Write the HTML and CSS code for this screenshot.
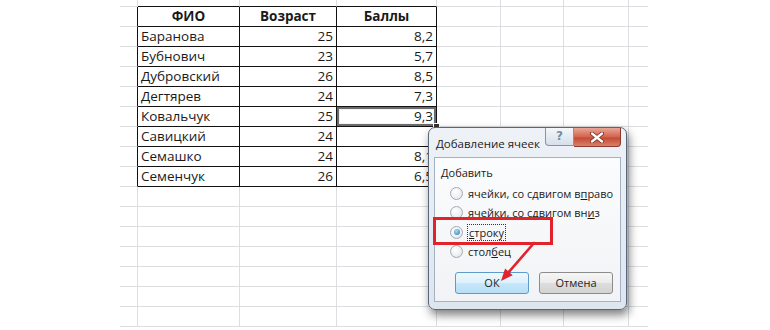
FILE: index.html
```html
<!DOCTYPE html>
<html lang="ru">
<head>
    <meta charset="UTF-8">
    <title>Добавление ячеек</title>
    <link rel="stylesheet" href="styles.css">
</head>
<body>
    <div class="sheet">
        <table class="grid">
            <colgroup>
                <col class="c-gut"><col class="c-b"><col class="c-c"><col class="c-d">
                <col class="c-e"><col class="c-f"><col class="c-g"><col class="c-h">
            </colgroup>
            <tr class="r-top"><td></td><td class="above"></td><td class="above"></td><td class="above"></td><td></td><td></td><td></td><td></td></tr>
            <tr><td class="edge"></td><th class="t">ФИО</th><th class="t">Возраст</th><th class="t">Баллы</th><td></td><td></td><td></td><td></td></tr>
            <tr><td class="edge"></td><td class="t name">Баранова</td><td class="t num">25</td><td class="t num">8,2</td><td></td><td></td><td></td><td></td></tr>
            <tr><td class="edge"></td><td class="t name">Бубнович</td><td class="t num">23</td><td class="t num">5,7</td><td></td><td></td><td></td><td></td></tr>
            <tr><td class="edge"></td><td class="t name">Дубровский</td><td class="t num">26</td><td class="t num">8,5</td><td></td><td></td><td></td><td></td></tr>
            <tr><td class="edge"></td><td class="t name">Дегтярев</td><td class="t num">24</td><td class="t num">7,3</td><td></td><td></td><td></td><td></td></tr>
            <tr><td class="edge"></td><td class="t name">Ковальчук</td><td class="t num">25</td><td class="t num sel">9,3<span class="handle"></span></td><td></td><td></td><td></td><td></td></tr>
            <tr><td class="edge"></td><td class="t name">Савицкий</td><td class="t num">24</td><td class="t num"></td><td></td><td></td><td></td><td></td></tr>
            <tr><td class="edge"></td><td class="t name">Семашко</td><td class="t num">24</td><td class="t num">8,1</td><td></td><td></td><td></td><td></td></tr>
            <tr><td class="edge"></td><td class="t name">Семенчук</td><td class="t num">26</td><td class="t num">6,5</td><td></td><td></td><td></td><td></td></tr>
            <tr><td></td><td></td><td></td><td></td><td></td><td></td><td></td><td></td></tr>
            <tr><td></td><td></td><td></td><td></td><td></td><td></td><td></td><td></td></tr>
            <tr><td></td><td></td><td></td><td></td><td></td><td></td><td></td><td></td></tr>
            <tr><td></td><td></td><td></td><td></td><td></td><td></td><td></td><td></td></tr>
            <tr><td></td><td></td><td></td><td></td><td></td><td></td><td></td><td></td></tr>
            <tr><td></td><td></td><td></td><td></td><td></td><td></td><td></td><td></td></tr>
            <tr><td></td><td></td><td></td><td></td><td></td><td></td><td></td><td></td></tr>
        </table>
    </div>

    <!-- Insert cells dialog -->
    <div class="dlg">
        <div class="dlg-title">
            <span class="dlg-caption">Добавление ячеек</span>
            <div class="dlg-ctrls">
                <span class="btn-help">?</span>
                <span class="btn-close">
                    <svg width="14" height="11" viewBox="0 0 14 11">
                        <path d="M2 1.5 L12 9.5 M12 1.5 L2 9.5" stroke="#7a2a1e" stroke-width="4" stroke-linecap="round"/>
                        <path d="M2 1.5 L12 9.5 M12 1.5 L2 9.5" stroke="#fff" stroke-width="2.4" stroke-linecap="round"/>
                    </svg>
                </span>
            </div>
        </div>
        <div class="dlg-body">
            <div class="group-label">Добавить</div>
            <div class="opts">
                <div class="opt"><span class="radio"></span><span>ячейки, со сдвигом в<u>п</u>раво</span></div>
                <div class="opt"><span class="radio"></span><span>ячейки, со сдвигом вн<u>и</u>з</span></div>
                <div class="opt"><span class="radio on"></span><span class="focus"><u>с</u>троку</span></div>
                <div class="opt"><span class="radio"></span><span>стол<u>б</u>ец</span></div>
            </div>
            <div class="btns">
                <span class="btn btn-ok">ОК</span>
                <span class="btn">Отмена</span>
            </div>
        </div>
    </div>

    <div class="callout"></div>
    <svg class="arrow" width="60" height="50" viewBox="0 0 60 50">
        <path d="M44 3 L18.9 31.9" stroke="#e2232b" stroke-width="2.6" stroke-linecap="round"/>
        <path d="M11 41 L22.7 35.2 L15.1 28.6 Z" fill="#e2232b"/>
    </svg>
</body>
</html>
```

FILE: styles.css
```css
body {
    margin: 0;
    background-color: #ffffff;
    position: relative;
    width: 770px;
    height: 330px;
    overflow: hidden;
}

.sheet {
    margin-left: 120px;
    width: 528px;
}

.grid {
    border-collapse: separate;
    border-spacing: 0;
    table-layout: fixed;
    width: 528px;
    font-family: "Open Sans", sans-serif;
    font-size: 13.5px;
    color: #1a1a1a;
}

.c-gut { width: 18px; }
.c-b { width: 102px; }
.c-c { width: 97px; }
.c-d { width: 100px; }
.c-e { width: 64px; }
.c-f { width: 63px; }
.c-g { width: 65px; }
.c-h { width: 19px; }

.grid td, .grid th {
    height: 19px;
    padding: 0 3px;
    line-height: 19px;
    border-right: 1px solid #dcdee2;
    border-bottom: 1px solid #dcdee2;
    white-space: nowrap;
    overflow: hidden;
}

.grid tr td:last-child {
    border-right: none;
}

.grid .r-top td {
    height: 6px;
    line-height: 6px;
}

.grid td.above {
    border-bottom-color: #111;
}

.grid td.edge {
    border-right-color: #111;
}

.grid .t {
    border-right-color: #111;
    border-bottom-color: #111;
}

.grid th {
    font-weight: 700;
    text-align: center;
}

.grid .name {
    text-align: left;
}

.grid .num {
    text-align: right;
}

.grid .sel {
    position: relative;
    box-shadow: inset 0 0 0 2px #6b6b6b, inset 0 0 0 3px #f2f2f2;
    overflow: visible;
}

.handle {
    position: absolute;
    right: -4px;
    bottom: -4px;
    width: 5px;
    height: 5px;
    background-color: #333;
    border: 1px solid #fff;
}

/* dialog */
.dlg {
    position: absolute;
    left: 428px;
    top: 127px;
    width: 197px;
    height: 181px;
    border: 1px solid #59677a;
    border-radius: 7px;
    background: linear-gradient(#eef2f7, #dde5ef);
    box-shadow: 2px 5px 10px rgba(0, 0, 0, 0.5);
    font-family: "Open Sans", sans-serif;
    font-size: 11px;
    color: #1a1a1a;
    display: flex;
    flex-direction: column;
}

.dlg-title {
    height: 29px;
    display: flex;
    justify-content: space-between;
    align-items: flex-start;
}

.dlg-caption {
    margin: 8px 0 0 7px;
    font-size: 11.5px;
    color: #222;
}

.dlg-ctrls {
    display: flex;
    margin-right: 5px;
}

.btn-help {
    width: 27px;
    height: 17px;
    border: 1px solid #8794a6;
    border-top: none;
    border-radius: 0 0 0 4px;
    background: linear-gradient(#f4f7fa, #d7dfea);
    color: #7d8ba0;
    font-family: "DejaVu Sans", sans-serif;
    font-size: 12px;
    font-weight: 700;
    text-align: center;
    line-height: 17px;
}

.btn-close {
    width: 46px;
    height: 18px;
    border: 1px solid #8a3b2e;
    border-top: none;
    border-left: none;
    border-radius: 0 0 4px 0;
    background: linear-gradient(#e9a697, #d4624b 50%, #c44a32 55%, #d9806c);
    display: flex;
    align-items: center;
    justify-content: center;
}

.dlg-body {
    flex: 1;
    margin: 0 5px 7px 5px;
    border: 1px solid #a5b1c0;
    background: linear-gradient(#fbfcfd, #f1f3f6);
    position: relative;
}

.group-label {
    margin: 7px 0 0 6px;
}

.opts {
    margin: 5px 0 0 15px;
    display: flex;
    flex-direction: column;
    gap: 3px;
}

.opt {
    height: 16.5px;
    display: flex;
    align-items: center;
    gap: 5px;
    white-space: nowrap;
}

.opt u {
    text-underline-offset: 1px;
}

.radio {
    flex: none;
    width: 11px;
    height: 11px;
    border: 1px solid #a3aab3;
    border-radius: 50%;
    background: radial-gradient(circle at 40% 35%, #ffffff, #dfe3e8);
    position: relative;
}

.radio.on::after {
    content: '';
    position: absolute;
    left: 2.5px;
    top: 2.5px;
    width: 6px;
    height: 6px;
    border-radius: 50%;
    background: radial-gradient(circle at 40% 35%, #a9dcf6, #2a77ad);
}

.focus {
    outline: 1px dotted #333;
    outline-offset: 0;
    padding: 0 1px;
}

.btns {
    position: absolute;
    left: 20px;
    bottom: 7px;
    display: flex;
    gap: 10px;
}

.btn {
    width: 72px;
    height: 20px;
    border: 1px solid #8c8c8c;
    border-radius: 3px;
    background: linear-gradient(#f6f6f6, #ebebeb 50%, #dddddd 51%, #d3d3d3);
    text-align: center;
    line-height: 20px;
    color: #222;
}

.btn-ok {
    border-color: #5e9bc9;
    background: linear-gradient(#eef8fe, #dcf1fc 50%, #c6e7fb 51%, #b8def6);
}

/* annotation */
.callout {
    position: absolute;
    left: 433px;
    top: 217px;
    width: 114px;
    height: 22px;
    border: 3px solid #e2232b;
}

.arrow {
    position: absolute;
    left: 490px;
    top: 240px;
}
```
